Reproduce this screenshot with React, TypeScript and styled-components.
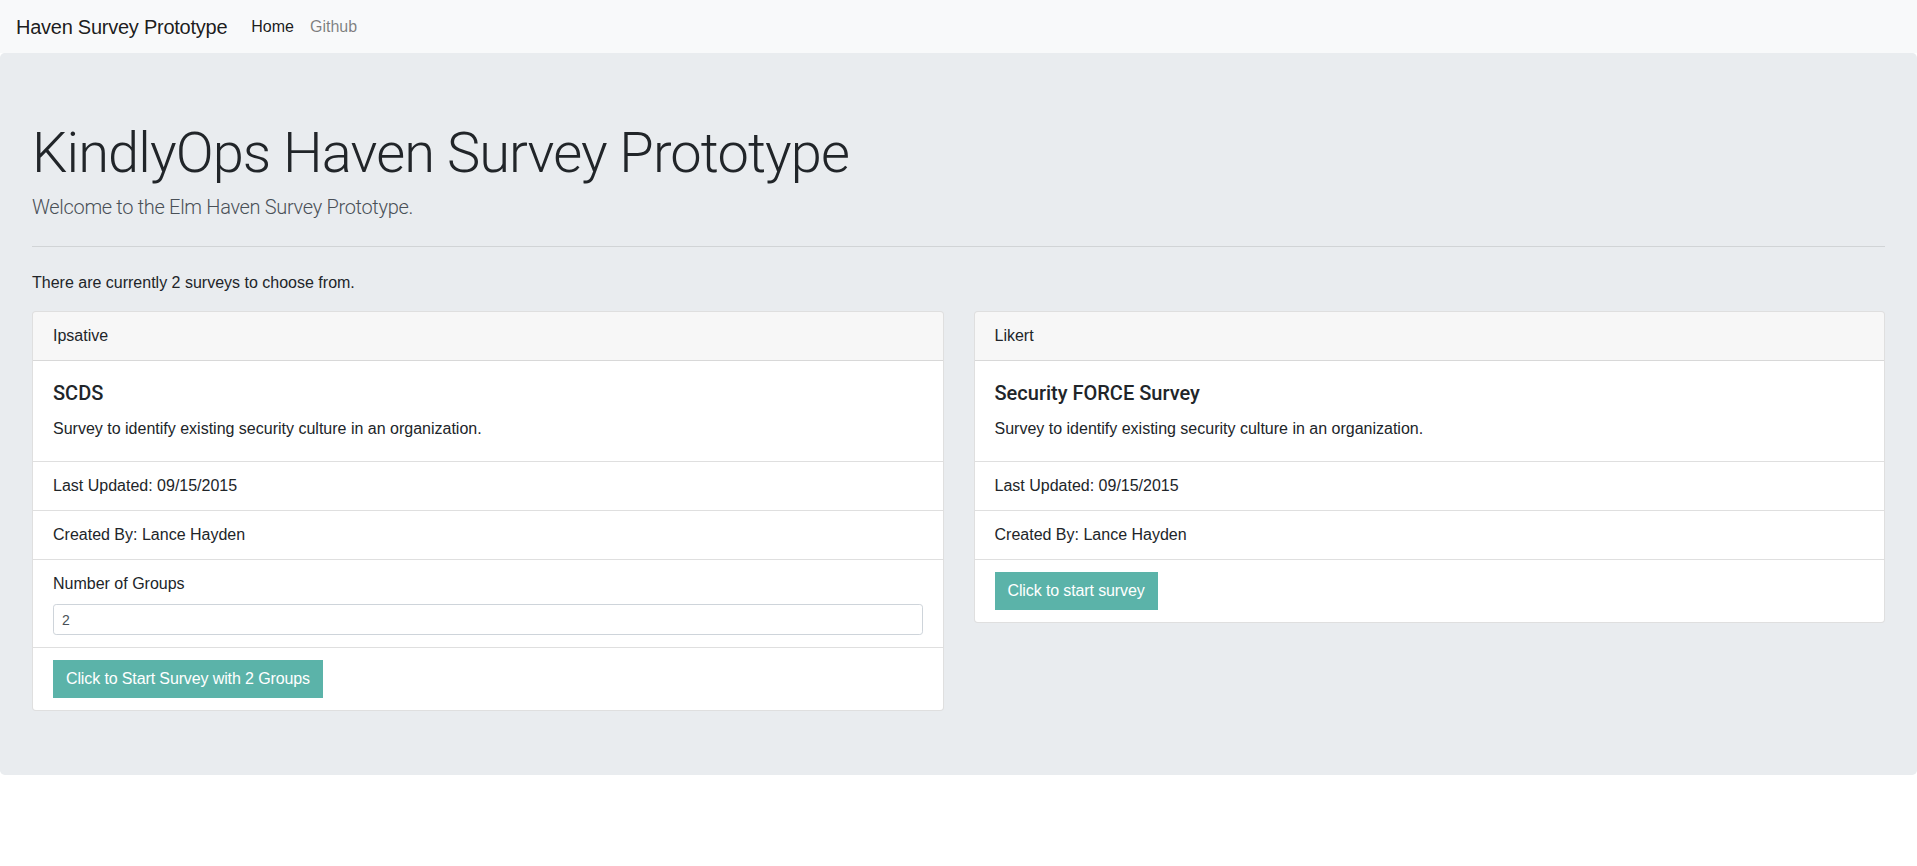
import React from "react";
import styled, { createGlobalStyle } from "styled-components";

const GlobalStyle = createGlobalStyle`
  *, *::before, *::after { box-sizing: border-box; }
  html, body { margin: 0; padding: 0; }
  body {
    background: #ffffff;
    color: #212529;
    font-family: "Liberation Sans", Arial, sans-serif;
    font-size: 16px;
    line-height: 1.5;
  }
`;

const Navbar = styled.nav`
  display: flex;
  align-items: center;
  height: 53px;
  padding: 0 16px;
  background: #f8f9fa;
`;

const Brand = styled.a`
  font-size: 20px;
  line-height: 30px;
  letter-spacing: -0.25px;
  color: rgba(0, 0, 0, 0.9);
  margin-right: 16px;
  text-decoration: none;
`;

const NavList = styled.div`
  display: flex;
  align-items: center;
`;

const NavLink = styled.a<{ $active?: boolean }>`
  padding: 0 8px;
  font-size: 16px;
  line-height: 24px;
  text-decoration: none;
  color: ${(p) => (p.$active ? "rgba(0,0,0,0.9)" : "rgba(0,0,0,0.5)")};
`;

const Jumbotron = styled.section`
  background: #e9ecef;
  border-radius: 4.8px;
  padding: 64px 32px;
  margin-bottom: 32px;
`;

const Title = styled.h1`
  font-family: Roboto, "Liberation Sans", sans-serif;
  font-weight: 300;
  font-size: 56px;
  line-height: 1.2;
  letter-spacing: -0.9px;
  margin: 0 0 5px;
  padding-top: 3px;
  color: #212529;
`;

const Lead = styled.p`
  font-family: Roboto, "Liberation Sans", sans-serif;
  font-weight: 300;
  font-size: 20px;
  line-height: 30px;
  letter-spacing: -0.32px;
  margin: 0 0 16px;
  color: #495057;
`;

const Rule = styled.hr`
  border: 0;
  border-top: 1px solid rgba(0, 0, 0, 0.1);
  margin: 24px 0;
`;

const Intro = styled.p`
  margin: 0 0 16px;
`;

const CardDeck = styled.div`
  display: grid;
  grid-template-columns: 1fr 1fr;
  gap: 30px;
  align-items: start;
`;

const Card = styled.div`
  display: flex;
  flex-direction: column;
  background: #ffffff;
  border: 1px solid rgba(0, 0, 0, 0.125);
  border-radius: 4px;
  overflow: hidden;
`;

const CardHeader = styled.div`
  padding: 12px 20px;
  background: rgba(0, 0, 0, 0.03);
  border-bottom: 1px solid rgba(0, 0, 0, 0.125);
`;

const CardBody = styled.div`
  padding: 20px;
`;

const CardTitle = styled.h5`
  font-family: Roboto, "Liberation Sans", sans-serif;
  font-weight: 500;
  font-size: 20px;
  line-height: 1.2;
  margin: 0 0 12px;
`;

const CardText = styled.p`
  margin: 0;
`;

const ListGroup = styled.ul`
  list-style: none;
  margin: 0;
  padding: 0;
`;

const ListItem = styled.li`
  padding: 12px 20px;
  border-top: 1px solid rgba(0, 0, 0, 0.125);
`;

const Label = styled.label`
  display: block;
  margin-bottom: 8px;
`;

const Input = styled.input`
  display: block;
  width: 100%;
  height: 31px;
  padding: 4px 8px;
  font-family: "Liberation Sans", Arial, sans-serif;
  font-size: 14px;
  line-height: 1.5;
  color: #495057;
  background: #ffffff;
  border: 1px solid #ced4da;
  border-radius: 3.2px;
  outline: none;
`;

const Button = styled.button`
  display: inline-block;
  font-family: "Liberation Sans", Arial, sans-serif;
  font-size: 16px;
  line-height: 24px;
  letter-spacing: -0.12px;
  padding: 6px 12px;
  color: #ffffff;
  background: #5bb3a9;
  border: 1px solid #5bb3a9;
  border-radius: 0;
  cursor: pointer;
`;

type Survey = {
  kind: string;
  name: string;
  description: string;
  updated: string;
  author: string;
  groups?: number;
};

const surveys: Survey[] = [
  {
    kind: "Ipsative",
    name: "SCDS",
    description: "Survey to identify existing security culture in an organization.",
    updated: "09/15/2015",
    author: "Lance Hayden",
    groups: 2,
  },
  {
    kind: "Likert",
    name: "Security FORCE Survey",
    description: "Survey to identify existing security culture in an organization.",
    updated: "09/15/2015",
    author: "Lance Hayden",
  },
];

function SurveyCard({ survey }: { survey: Survey }) {
  return (
    <Card>
      <CardHeader>{survey.kind}</CardHeader>
      <CardBody>
        <CardTitle>{survey.name}</CardTitle>
        <CardText>{survey.description}</CardText>
      </CardBody>
      <ListGroup>
        <ListItem>Last Updated: {survey.updated}</ListItem>
        <ListItem>Created By: {survey.author}</ListItem>
        {survey.groups !== undefined && (
          <ListItem>
            <Label htmlFor="groups">Number of Groups</Label>
            <Input id="groups" type="text" defaultValue={String(survey.groups)} />
          </ListItem>
        )}
        <ListItem>
          <Button>
            {survey.groups !== undefined
              ? `Click to Start Survey with ${survey.groups} Groups`
              : "Click to start survey"}
          </Button>
        </ListItem>
      </ListGroup>
    </Card>
  );
}

export default function App() {
  return (
    <>
      <GlobalStyle />
      <Navbar>
        <Brand href="#">Haven Survey Prototype</Brand>
        <NavList>
          <NavLink $active href="#">Home</NavLink>
          <NavLink href="#">Github</NavLink>
        </NavList>
      </Navbar>
      <Jumbotron>
        <Title>KindlyOps Haven Survey Prototype</Title>
        <Lead>Welcome to the Elm Haven Survey Prototype.</Lead>
        <Rule />
        <Intro>There are currently {surveys.length} surveys to choose from.</Intro>
        <CardDeck>
          {surveys.map((s) => (
            <SurveyCard key={s.name} survey={s} />
          ))}
        </CardDeck>
      </Jumbotron>
    </>
  );
}
